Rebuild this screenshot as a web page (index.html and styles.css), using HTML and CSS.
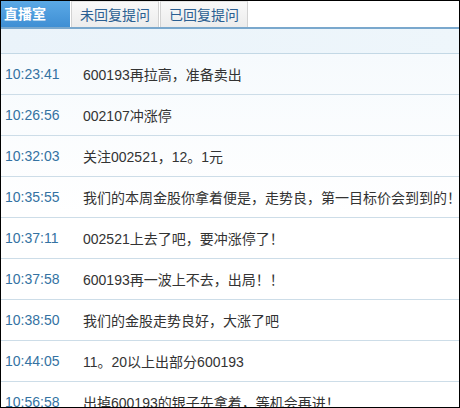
FILE: index.html
```html
<!DOCTYPE html>
<html>
<head>
<meta charset="utf-8">
<link rel="stylesheet" href="styles.css">
</head>
<body>
<div class="frame">
  <div class="tabs">
    <div class="tab active">直播室</div>
    <div class="tab">未回复提问</div>
    <div class="tab">已回复提问</div>
  </div>
  <div class="rule"></div>
  <div class="head"></div>
  <div class="list">
    <div class="row"><span class="time">10:23:41</span><span class="msg">600193再拉高，准备卖出</span></div>
    <div class="row"><span class="time">10:26:56</span><span class="msg">002107冲涨停</span></div>
    <div class="row"><span class="time">10:32:03</span><span class="msg">关注002521，12。1元</span></div>
    <div class="row"><span class="time">10:35:55</span><span class="msg">我们的本周金股你拿着便是，走势良，第一目标价会到到的！</span></div>
    <div class="row"><span class="time">10:37:11</span><span class="msg">002521上去了吧，要冲涨停了！</span></div>
    <div class="row"><span class="time">10:37:58</span><span class="msg">600193再一波上不去，出局！！</span></div>
    <div class="row"><span class="time">10:38:50</span><span class="msg">我们的金股走势良好，大涨了吧</span></div>
    <div class="row"><span class="time">10:44:05</span><span class="msg">11。20以上出部分600193</span></div>
    <div class="row"><span class="time">10:56:58</span><span class="msg">出掉600193的银子先拿着，等机会再进！</span></div>
  </div>
</div>
</body>
</html>
```
FILE: styles.css
```css
html, body {
  margin: 0;
  padding: 0;
  background: #fff;
}
.frame {
  width: 460px;
  height: 408px;
  box-sizing: border-box;
  border: 1px solid #000;
  overflow: hidden;
  background: #fff;
  font-family: "Liberation Sans", "Noto Sans CJK SC", sans-serif;
}
.tabs {
  display: flex;
  height: 26px;
  background: #fff;
}
.tab {
  box-sizing: border-box;
  height: 26px;
  line-height: 26px;
  font-size: 14px;
  color: #2b5f92;
  text-align: center;
  width: 88px;
  margin-left: 1px;
  background: linear-gradient(#f9f9f9, #ececec);
  border: 1px solid #d2d2d2;
  border-bottom: none;
  border-top-color: #e4e4e4;
}
.tab.active {
  width: 69px;
  margin-left: 0;
  border: none;
  color: #fff;
  font-weight: bold;
  text-align: left;
  padding-left: 3px;
  background: linear-gradient(#5ba9e6, #3f8fd4);
}
.rule {
  height: 2px;
  background: #7aa8cd;
}
.head {
  height: 24px;
  background: linear-gradient(to right, #eaf3fa, #eef6fb);
  border-bottom: 1px solid #c3d8e5;
}
.list {
  background: linear-gradient(#f6fafd, #ffffff 160px);
}
.row {
  display: flex;
  align-items: center;
  height: 40px;
  border-bottom: 1px solid #cddde8;
}
.time {
  width: 78px;
  padding-left: 4px;
  font-size: 14px;
  color: #3472a2;
  flex: none;
}
.msg {
  font-size: 14px;
  color: #333;
  white-space: nowrap;
}
```
